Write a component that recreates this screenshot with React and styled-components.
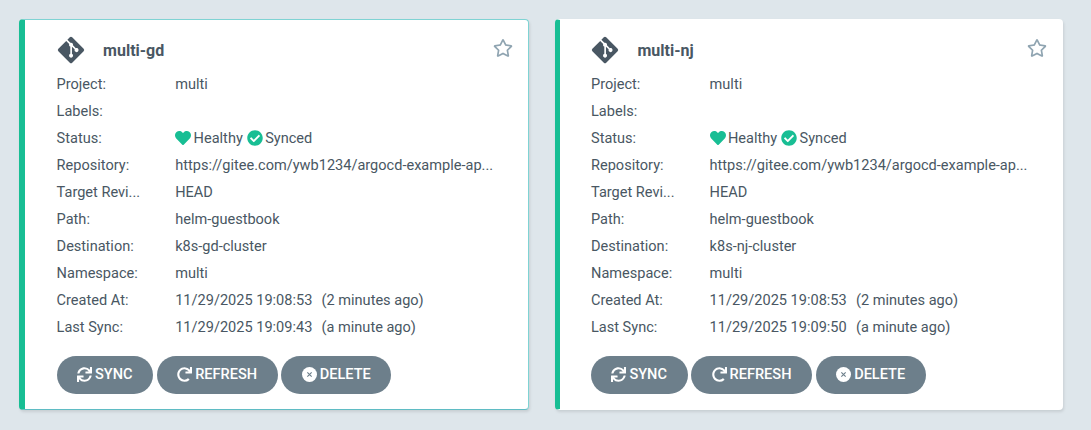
import styled, { createGlobalStyle } from "styled-components";
import { FaGitAlt, FaRegStar, FaHeart, FaCheckCircle, FaSync, FaRedo } from "react-icons/fa";

const GlobalStyle = createGlobalStyle`
  html, body {
    margin: 0;
    height: 100%;
    background: #dee6eb;
    font-family: Roboto, "Liberation Sans", sans-serif;
    font-size: 14.56px;
    color: #495763;
  }
`;

const Grid = styled.div`
  display: grid;
  grid-template-columns: 510px 508px;
  column-gap: 26px;
  padding: 19px 0 0 19px;
`;

const Card = styled.div`
  box-sizing: border-box;
  height: 391px;
  background: #fff;
  border-radius: 4px;
  border: 1px solid ${(p) => (p.$active ? "#7fd3d3" : "transparent")};
  border-bottom-color: ${(p) => (p.$active ? "#5fbcc4" : "transparent")};
  border-left: ${(p) => (p.$active ? 6 : 5)}px solid #18be94;
  box-shadow: 1px 2px 3px rgba(0, 0, 0, 0.1);
  padding: 15px 0 0 ${(p) => (p.$active ? 31.6 : 31)}px;
  position: relative;
`;

const Title = styled.div`
  display: flex;
  align-items: center;
  height: 30px;
  margin-bottom: 5px;
  font-size: 16px;
  font-weight: 700;
`;

const GitIcon = styled(FaGitAlt)`
  width: 30px;
  height: 30px;
  margin: 0 0 0 -1px;
  color: #495763;
`;

const Name = styled.span`
  margin-left: 17.5px;
`;

const Star = styled(FaRegStar)`
  position: absolute;
  top: 18px;
  right: 15px;
  width: 20px;
  height: 20px;
  color: #8fa4b1;
`;

const Row = styled.div`
  display: flex;
  align-items: center;
  height: 27px;
`;

const Label = styled.div`
  width: 118.6px;
  flex: none;
`;

const Value = styled.div`
  display: flex;
  align-items: center;
  white-space: pre;
`;

const Ago = styled.span`
  margin-left: 2px;
`;

const StatusIcon = styled.span`
  display: inline-flex;
  color: #18be94;
  font-size: 16px;
  margin: 0 ${(p) => p.$after}px 0 ${(p) => p.$gap || 0}px;
`;

const Actions = styled.div`
  display: flex;
  gap: 3.7px;
  margin-top: 16px;
`;

const Action = styled.button`
  display: inline-flex;
  align-items: center;
  justify-content: center;
  gap: 3px;
  height: 38px;
  padding: 0 20.6px 2px 20.4px;
  border: 0;
  border-radius: 19px;
  background: #6d7f8b;
  color: #fff;
  font-family: inherit;
  font-size: 14.56px;
  font-weight: 500;
  svg {
    width: 15px;
    height: 15px;
  }
`;

function DeleteIcon() {
  return (
    <svg viewBox="0 0 16 16">
      <circle cx="8" cy="8" r="8" fill="#fff" />
      <path d="M5.7 5.7l4.6 4.6M10.3 5.7l-4.6 4.6" stroke="#6d7f8b" strokeWidth="1.2" fill="none" />
    </svg>
  );
}

const apps = [
  { name: "multi-gd", dest: "k8s-gd-cluster", sync: "11/29/2025 19:09:43", active: true },
  { name: "multi-nj", dest: "k8s-nj-cluster", sync: "11/29/2025 19:09:50" },
];

function AppCard({ app }) {
  return (
    <Card $active={app.active}>
      <Star />
      <Title>
        <GitIcon />
        <Name>{app.name}</Name>
      </Title>
      <Row><Label>Project:</Label><Value>multi</Value></Row>
      <Row><Label>Labels:</Label><Value /></Row>
      <Row>
        <Label>Status:</Label>
        <Value>
          <StatusIcon $after={2.4}><FaHeart /></StatusIcon>Healthy
          <StatusIcon $gap={4} $after={2.4}><FaCheckCircle /></StatusIcon>Synced
        </Value>
      </Row>
      <Row><Label>Repository:</Label><Value>https://gitee.com/ywb1234/argocd-example-ap...</Value></Row>
      <Row><Label>Target Revi...</Label><Value>HEAD</Value></Row>
      <Row><Label>Path:</Label><Value>helm-guestbook</Value></Row>
      <Row><Label>Destination:</Label><Value>{app.dest}</Value></Row>
      <Row><Label>Namespace:</Label><Value>multi</Value></Row>
      <Row><Label>Created At:</Label><Value>11/29/2025 19:08:53  <Ago>(2 minutes ago)</Ago></Value></Row>
      <Row><Label>Last Sync:</Label><Value>{app.sync}  <Ago>(a minute ago)</Ago></Value></Row>
      <Actions>
        <Action><FaSync />SYNC</Action>
        <Action><FaRedo />REFRESH</Action>
        <Action><DeleteIcon />DELETE</Action>
      </Actions>
    </Card>
  );
}

export default function App() {
  return (
    <>
      <GlobalStyle />
      <Grid>
        {apps.map((a) => (
          <AppCard key={a.name} app={a} />
        ))}
      </Grid>
    </>
  );
}
